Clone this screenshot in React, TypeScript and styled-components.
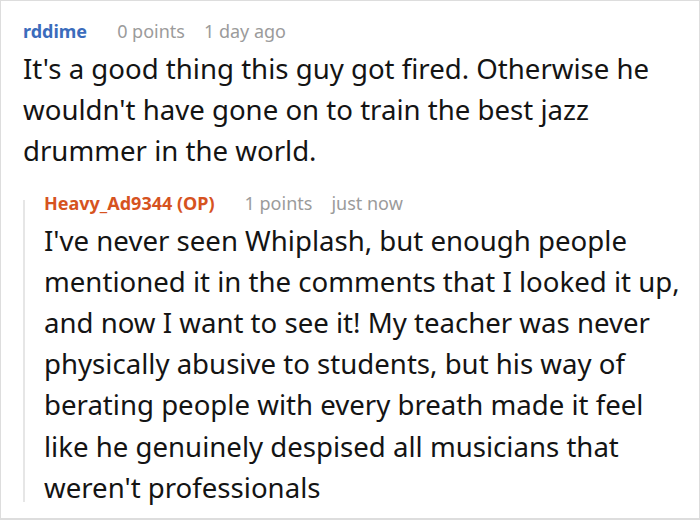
import styled, { createGlobalStyle } from 'styled-components';

const GlobalStyle = createGlobalStyle`
  html, body {
    margin: 0;
    padding: 0;
    background: #ffffff;
  }
  body {
    font-family: 'Noto Sans', 'Open Sans', sans-serif;
  }
`;

const Frame = styled.div`
  box-sizing: border-box;
  width: 700px;
  height: 520px;
  border: 1px solid #dddddd;
  border-bottom-width: 2px;
  background: #ffffff;
  padding: 15px 0 0 22px;
  overflow: hidden;
`;

const Comment = styled.div`
  display: flex;
  flex-direction: column;
  flex: 1;
`;

const Meta = styled.div`
  display: flex;
  align-items: center;
  font-size: 18px;
  line-height: 30px;
  height: 30px;
  white-space: nowrap;
`;

const Author = styled.span<{ $op?: boolean }>`
  font-weight: 700;
  color: ${p => (p.$op ? '#d6531f' : '#3b6cbc')};
  margin-right: 30px;
`;

const Stat = styled.span`
  color: #9b9b9b;
  margin-right: 19px;
`;

const Body = styled.div`
  margin-top: 2px;
  font-size: 27.6px;
  line-height: 41.2px;
  color: #141414;
`;

// lines kept as in the screenshot so the wraps land on the same words
const Line = styled.span`
  display: block;
  white-space: nowrap;
`;

const Replies = styled.div`
  display: flex;
  margin-top: 16px;
`;

const ThreadLine = styled.div`
  width: 2px;
  flex-shrink: 0;
  background: #e6e6e6;
  margin: 12px 19px 6px 0;
`;

const comments = {
  parent: {
    author: 'rddime',
    points: '0 points',
    time: '1 day ago',
    lines: [
      "It's a good thing this guy got fired. Otherwise he",
      "wouldn't have gone on to train the best jazz",
      'drummer in the world.',
    ],
  },
  reply: {
    author: 'Heavy_Ad9344 (OP)',
    points: '1 points',
    time: 'just now',
    lines: [
      "I've never seen Whiplash, but enough people",
      'mentioned it in the comments that I looked it up,',
      'and now I want to see it! My teacher was never',
      'physically abusive to students, but his way of',
      'berating people with every breath made it feel',
      'like he genuinely despised all musicians that',
      "weren't professionals",
    ],
  },
};

export default function App() {
  const { parent, reply } = comments;
  return (
    <>
      <GlobalStyle />
      <Frame>
        <Comment>
          <Meta>
            <Author>{parent.author}</Author>
            <Stat>{parent.points}</Stat>
            <Stat>{parent.time}</Stat>
          </Meta>
          <Body>
            {parent.lines.map((l, i) => (
              <Line key={i}>{l}</Line>
            ))}
          </Body>
          <Replies>
            <ThreadLine />
            <Comment>
              <Meta>
                <Author $op>{reply.author}</Author>
                <Stat>{reply.points}</Stat>
                <Stat>{reply.time}</Stat>
              </Meta>
              <Body>
                {reply.lines.map((l, i) => (
                  <Line key={i}>{l}</Line>
                ))}
              </Body>
            </Comment>
          </Replies>
        </Comment>
      </Frame>
    </>
  );
}
